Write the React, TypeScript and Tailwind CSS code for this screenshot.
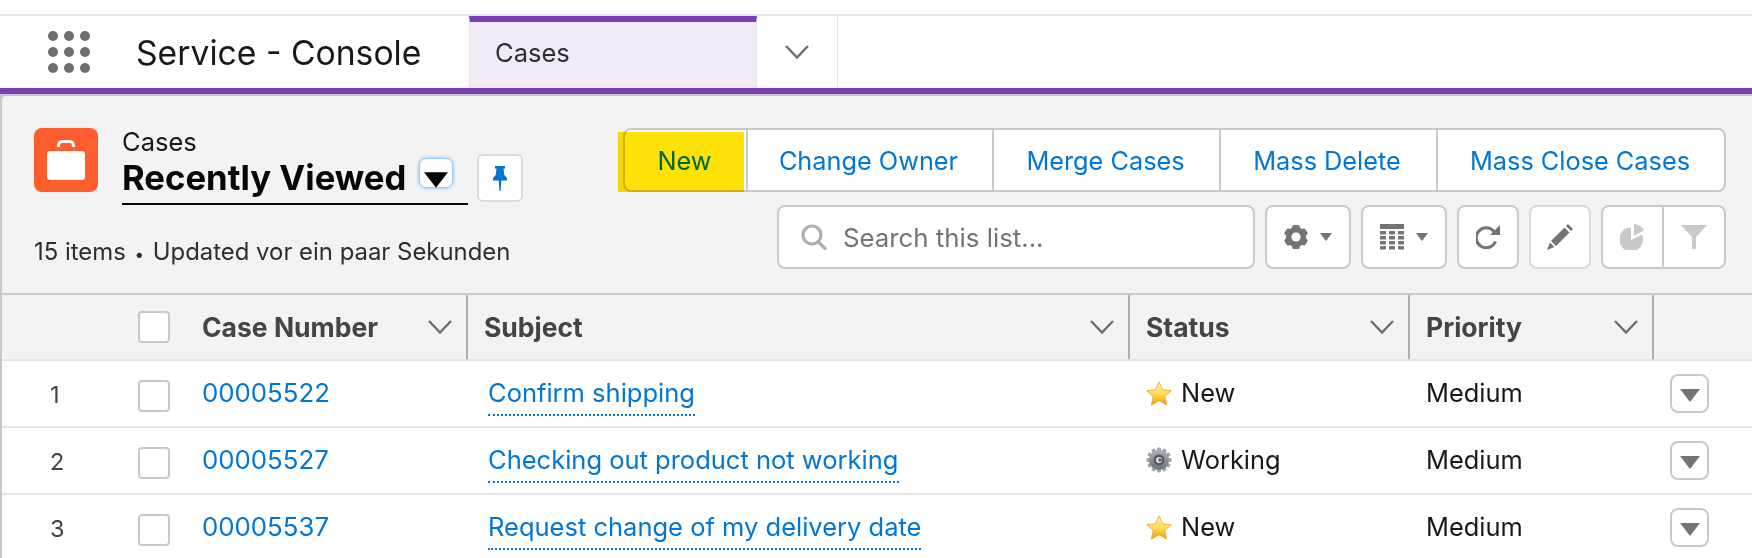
const rows = [
  { n: 1, num: '00005522', subject: 'Confirm shipping', status: 'New', w: 'w-[207px]' },
  { n: 2, num: '00005527', subject: 'Checking out product not working', status: 'Working', w: 'w-[411px]' },
  { n: 3, num: '00005537', subject: 'Request change of my delivery date', status: 'New', w: 'w-[433px]' },
];

function Caret({ className }: { className: string }) {
  return (
    <svg viewBox="0 0 20 13" className={className}>
      <path d="M0 0h20L10 13z" fill="currentColor" />
    </svg>
  );
}

function Chevron() {
  return (
    <svg viewBox="0 0 24 14" className="h-[14px] w-[24px] shrink-0 text-[#706e6b]" fill="none">
      <path d="M1 1l11 11.500L23 1" stroke="currentColor" strokeWidth="2.4" />
    </svg>
  );
}

function Star() {
  return (
    <svg viewBox="0 0 26 25" className="h-[25px] w-[26px] shrink-0">
      <defs>
        <linearGradient id="star" x1="0" y1="0" x2="0" y2="1">
          <stop offset="0" stopColor="#fff6c4" />
          <stop offset="0.5" stopColor="#ffdc55" />
          <stop offset="1" stopColor="#f79a0a" />
        </linearGradient>
      </defs>
      <path
        d="M13 .8l3.600 8 8.600.9-6.400 5.800 1.800 8.600L13 19.700 5.400 24.100l1.800-8.600L.8 9.700l8.600-.9z"
        fill="url(#star)"
        stroke="#f0a21c"
        strokeWidth="0.8"
        strokeLinejoin="round"
      />
    </svg>
  );
}

function Gear() {
  return (
    <svg viewBox="0 0 26 26" className="h-[26px] w-[26px] shrink-0">
      <defs>
        <linearGradient id="gear" x1="0" y1="0" x2="0" y2="1">
          <stop offset="0" stopColor="#a9b0ba" />
          <stop offset="1" stopColor="#6a717c" />
        </linearGradient>
      </defs>
      {[0, 30, 60, 90, 120, 150].map((a) => (
        <rect key={a} x="11" y="0.5" width="4" height="25" rx="1" fill="#a0a7b0" transform={`rotate(${a} 13 13)`} />
      ))}
      <circle cx="13" cy="13" r="10" fill="url(#gear)" />
      <circle cx="13" cy="13" r="5.500" fill="#565c66" />
      <circle cx="13" cy="13" r="3" fill="#dfe3e8" />
      <circle cx="14" cy="13" r="1.800" fill="#565c66" />
    </svg>
  );
}

export default function App() {
  return (
    <div className="h-[558px] w-[1752px] overflow-hidden bg-white font-['Inter',sans-serif] text-[#181818]">
      {/* App bar */}
      <div className="mt-[14px] flex h-[74px] border-t-2 border-[#e5e5e5] bg-white">
        <div className="flex w-[136px] items-center pl-[48px]">
          <div className="grid grid-cols-3 gap-[6px]">
            {Array.from({ length: 9 }).map((_, i) => (
              <span key={i} className="h-[10px] w-[10px] rounded-full bg-[#706e6b]" />
            ))}
          </div>
        </div>
        <div className="flex w-[333px] items-center pt-[2px] text-[33.7px]">Service - Console</div>
        <div className="flex w-[288px] items-center border-x border-[#e5e0ee] border-t-[6px] border-t-[#7a3db4] bg-[#f1ebf8] pb-[4px] pl-[25px] text-[25.5px] text-[#2e2e2e]">
          Cases
        </div>
        <div className="flex w-[81px] items-center justify-center border-r border-[#e5e5e5]">
          <Chevron />
        </div>
      </div>
      <div className="h-[6px] bg-[#7a3db4]" />

      {/* List header */}
      <div className="h-[199px] bg-[#aec6e8]">
        <div className="h-full rounded-tl-md border-l-2 border-t-2 border-[#c9c9c9] bg-[#f3f3f3] pt-[32px]">
          <div className="flex justify-between pl-[32px] pr-[26px]">
            <div>
              <div className="flex">
                <div className="flex h-[64px] w-[64px] items-center justify-center rounded-lg bg-[#ff5d2d]">
                  <svg viewBox="0 0 38 40" className="h-[40px] w-[38px]" fill="#fff">
                    <path d="M11.500 7C11.500 3 12.500 1.500 15 1.500h8c2.500 0 3.500 1.500 3.500 5.500" fill="none" stroke="#fff" strokeWidth="3" />
                    <rect x="0" y="11" width="38" height="29" rx="3" />
                  </svg>
                </div>
                <div className="ml-[24px]">
                  <div className="h-[30px] text-[25.5px] leading-[27px]">Cases</div>
                  <div className="flex h-[47px] w-[346px] items-start border-b-2 border-[#080707]">
                    <span className="text-[34.7px] font-bold leading-[39px] text-[#080707]">Recently Viewed</span>
                    <span className="ml-[14px] mt-[1px] flex h-[28px] w-[32px] items-end justify-center rounded-md bg-white shadow-[0_0_4px_#1b96ff]">
                      <Caret className="-mb-[1px] h-[16px] w-[24px] text-[#080707]" />
                    </span>
                  </div>
                </div>
                <div className="ml-[9px] mt-[26px] flex h-[48px] w-[46px] items-center justify-center rounded-md border-2 border-[#dddbda] bg-white">
                  <svg viewBox="0 0 14 25" className="h-[25px] w-[14px]" fill="#0176d3">
                    <path d="M2 0h10v2.500h-1.500l.8 6.500L14 12v2.500H8.300L7.600 25H6.400l-.7-10.500H0V12l2.700-3 .8-6.500H2z" />
                  </svg>
                </div>
              </div>
              <div className="mt-[31px] text-[23.9px] leading-[32px] text-[#2e2e2e]">
                15 items <span className="mx-[2px] text-[17px]">•</span> Updated vor ein paar Sekunden
              </div>
            </div>

            <div className="flex flex-col items-end">
              {/* Action buttons */}
              <div className="relative flex h-[64px] rounded-lg border-2 border-[#c9c9c9] bg-white text-[25.3px] text-[#0176d3]">
                <div className="flex w-[123px] items-center justify-center border-r-2 border-[#c9c9c9] pr-[2px] pt-[2px]">New</div>
                <div className="flex w-[246px] items-center justify-center border-r-2 border-[#c9c9c9] pr-[3px] pt-[2px]">Change Owner</div>
                <div className="flex w-[227px] items-center justify-center border-r-2 border-[#c9c9c9] pr-[2px] pt-[2px]">Merge Cases</div>
                <div className="flex w-[217px] items-center justify-center border-r-2 border-[#c9c9c9] pr-[3px] pt-[2px]">Mass Delete</div>
                <div className="flex w-[286px] items-center justify-center pr-[2px] pt-[2px]">Mass Close Cases</div>
                <div className="absolute -left-[7px] top-[2px] h-[60px] w-[126px] bg-[#ffe10a] mix-blend-multiply" />
              </div>

              {/* List controls */}
              <div className="mt-[13px] flex h-[64px] gap-[10px]">
                <div className="flex w-[478px] items-center rounded-lg border-2 border-[#c9c9c9] bg-white pl-[22px] text-[25.8px] text-[#747474]">
                  <svg viewBox="0 0 26 26" className="mr-[16px] h-[26px] w-[26px]" fill="none" stroke="#aeaeae" strokeWidth="3.200">
                    <circle cx="11" cy="11" r="9" />
                    <path d="M17.500 18l6.500 6.500" strokeLinecap="round" />
                  </svg>
                  <span className="pt-[2px]">Search this list...</span>
                </div>
                <div className="flex w-[86px] items-center justify-center gap-[12px] rounded-lg border-2 border-[#c9c9c9] bg-white">
                  <svg viewBox="0 0 26 26" className="h-[26px] w-[24px]" fill="#747474">
                    <circle cx="13" cy="13" r="11" />
                    {[0, 60, 120].map((a) => (
                      <rect key={a} x="9" y="0" width="8" height="26" rx="2" transform={`rotate(${a} 13 13)`} />
                    ))}
                    <circle cx="13" cy="13" r="5" fill="#fff" />
                  </svg>
                  <Caret className="h-[8px] w-[12px] text-[#747474]" />
                </div>
                <div className="flex w-[86px] items-center justify-center gap-[12px] rounded-lg border-2 border-[#c9c9c9] bg-white">
                  <svg viewBox="0 0 24 26" className="h-[26px] w-[24px]" fill="#747474">
                    <rect width="24" height="5" />
                    {[7, 12, 17, 22].map((y) =>
                      [0, 9, 18].map((x) => <rect key={`${x}-${y}`} x={x} y={y} width="6" height="3.500" rx="0.5" />),
                    )}
                  </svg>
                  <Caret className="h-[8px] w-[12px] text-[#747474]" />
                </div>
                <div className="flex w-[62px] items-center justify-center rounded-lg border-2 border-[#c9c9c9] bg-white">
                  <svg viewBox="0 0 24 24" className="h-[24px] w-[24px]" fill="none">
                    <path d="M19.500 16.500A10 10 0 1 1 18 6.500L20 9" stroke="#747474" strokeWidth="3" />
                    <path d="M24 0v10H14z" fill="#747474" />
                  </svg>
                </div>
                <div className="flex w-[62px] items-center justify-center rounded-lg border-2 border-[#dddbda] bg-white">
                  <svg viewBox="0 0 26 26" className="h-[26px] w-[26px]" fill="#747474">
                    <path d="M21 0l5 5-2 2-5-5zM17.500 3.500l5 5L9 22l-5-5zM3 18.500L7.500 23 0 26z" />
                  </svg>
                </div>
                <div className="flex w-[125px] rounded-lg border-2 border-[#c9c9c9] bg-white">
                  <div className="flex w-[61px] items-center justify-center border-r-2 border-[#c9c9c9]">
                    <svg viewBox="0 0 26 26" className="h-[26px] w-[26px]" fill="#c9c9c9">
                      <path d="M11 3.500V16l11-5.500A12 12 0 1 1 11 3.500z" />
                      <path d="M14 0a12 12 0 0 1 10 6.500L14 12z" />
                    </svg>
                  </div>
                  <div className="flex flex-1 items-center justify-center">
                    <svg viewBox="0 0 26 24" className="h-[24px] w-[26px]" fill="#c9c9c9">
                      <path d="M0 0h26L15 12v10.500a2 2 0 0 1-4 0V12z" />
                    </svg>
                  </div>
                </div>
              </div>
            </div>
          </div>
        </div>
      </div>

      {/* Table */}
      <div className="border-l-2 border-[#c9c9c9]">
        <div className="grid h-[68px] grid-cols-[136px_64px_266px_662px_280px_244px_1fr] border-y-2 border-t-[#c9c9c9] border-b-[#e5e5e5] bg-[#f3f3f3] text-[26.5px] font-bold text-[#444444]">
          <div />
          <div className="flex items-center">
            <span className="h-[32px] w-[32px] rounded-[4px] border-2 border-[#c9c9c9] bg-white" />
          </div>
          <div className="flex items-center justify-between border-r-2 border-[#aeaeae] pr-[14px]">
            <span className="pt-[2px]">Case Number</span>
            <Chevron />
          </div>
          <div className="flex items-center justify-between border-r-2 border-[#aeaeae] pl-[16px] pr-[14px]">
            <span className="pt-[2px]">Subject</span>
            <Chevron />
          </div>
          <div className="flex items-center justify-between border-r-2 border-[#aeaeae] pl-[16px] pr-[14px]">
            <span className="pt-[2px]">Status</span>
            <Chevron />
          </div>
          <div className="flex items-center justify-between border-r-2 border-[#aeaeae] pl-[16px] pr-[14px]">
            <span className="pt-[2px]">Priority</span>
            <Chevron />
          </div>
          <div />
        </div>
        {rows.map((r) => (
          <div
            key={r.n}
            className="grid h-[67px] grid-cols-[136px_64px_266px_662px_280px_244px_1fr] items-center border-b-2 border-[#e5e5e5] text-[25.4px]"
          >
            <div className="pl-[48px] pt-[3px] text-[23.5px] text-[#444444]">{r.n}</div>
            <span className="mt-[4px] h-[32px] w-[32px] rounded-[4px] border-2 border-[#c9c9c9] bg-white" />
            <div className="text-[25.8px] text-[#0176d3]">{r.num}</div>
            <div className="pl-[20px]">
              <span className={`block whitespace-nowrap border-b-2 border-dotted border-[#0176d3] pt-[3px] pb-[2px] text-[25.5px] text-[#0176d3] ${r.w}`}>
                {r.subject}
              </span>
            </div>
            <div className="flex items-center gap-[9px] pl-[16px]">
              {r.status === 'New' ? <Star /> : <Gear />}
              {r.status}
            </div>
            <div className="pl-[16px]">Medium</div>
            <div className="pl-[16px]">
              <span className="flex h-[39px] w-[39px] items-center justify-center rounded-lg border-2 border-[#c9c9c9]">
                <Caret className="mt-[4px] h-[13px] w-[20px] text-[#747474]" />
              </span>
            </div>
          </div>
        ))}
      </div>
    </div>
  );
}
